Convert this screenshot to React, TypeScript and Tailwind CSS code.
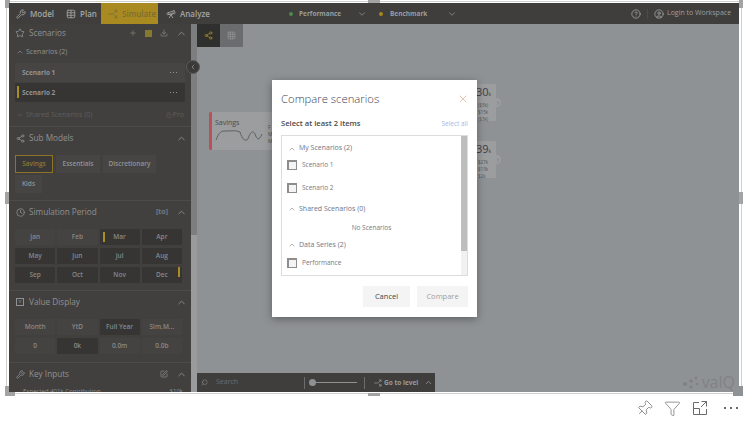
import { ChevronDown, ChevronLeft, ChevronRight, ChevronUp, CircleHelp, CircleUser, Clock, Download, Filter, Pin, Plus, Search, Share2, Star, Table, Telescope, Wrench, X, Split, SquarePen, Grid3x3, Lock } from 'lucide-react';
import type { ReactNode } from 'react';

const font = 'font-["Open_Sans",sans-serif]';

function TopItem({ icon, label, labelClass, className }: { icon: ReactNode; label: string; labelClass: string; className: string }) {
  return (
    <div className={`flex h-full shrink-0 items-center gap-[4px] whitespace-nowrap text-[8px] font-semibold ${className}`}>
      {icon}
      <span className={labelClass}>{label}</span>
    </div>
  );
}

function SectionHead({ icon, title, right, className }: { icon: ReactNode; title: string; right?: ReactNode; className?: string }) {
  return (
    <div className={`flex h-[18px] shrink-0 items-center pl-[6px] pr-[4px] text-[#8f9192] ${className ?? ''}`}>
      <span className="flex w-[10px] justify-center">{icon}</span>
      <span className="ml-[4px] text-[8.2px]">{title}</span>
      <span className="ml-auto flex items-center gap-[8px]">
        {right}
        <ChevronUp size={11} className="text-[#8a8c8c]" />
      </span>
    </div>
  );
}

function Dots() {
  return (
    <span className="flex gap-[2px]">
      <span className="h-px w-px bg-current" />
      <span className="h-px w-px bg-current" />
      <span className="h-px w-px bg-current" />
    </span>
  );
}

function Cell({ label, dark, marker }: { label: string; dark?: boolean; marker?: 'left' | 'right' }) {
  return (
    <div className={`relative flex h-[16px] items-center justify-center rounded-[1px] text-[6.5px] font-semibold text-[#85888a] ${dark ? 'bg-[#363534]' : 'bg-[#454341]'}`}>
      {marker === 'left' && <span className="absolute left-[3px] top-[3px] h-[10px] w-[2px] bg-[#a88d24]" />}
      {marker === 'right' && <span className="absolute right-[2px] top-0 h-[10px] w-[2px] bg-[#a88d24]" />}
      {label}
    </div>
  );
}

function CheckRow({ label, className }: { label: string; className?: string }) {
  return (
    <div className={`flex items-center pl-[5px] ${className ?? ''}`}>
      <span className="h-[10px] w-[10px] border border-t-2 border-l-2 border-[#8d8d8d] bg-[#f4f4f4]" />
      <span className="ml-[5px] text-[6.5px] text-[#77777f]">{label}</span>
    </div>
  );
}

function GroupHead({ label, className }: { label: string; className?: string }) {
  return (
    <div className={`flex items-center pl-[6px] text-[7px] text-[#6e7488] ${className ?? ''}`}>
      <ChevronUp size={8} className="mr-[3px] text-[#8a8a8a]" />
      {label}
    </div>
  );
}

function MiniCard({ value, lines, className }: { value: string; lines: string[]; className: string }) {
  return (
    <div className={`absolute h-[37px] w-[30px] rounded-[1px] bg-[#9b9d9e] pl-[10px] ${className}`}>
      <div className="text-[11px] leading-[15px] text-[#3c4048]">{value}<span className="text-[5px]">k</span></div>
      <div className="pl-[2px] text-[4.5px] leading-[7px] text-[#55575a]">
        {lines.map((l) => <div key={l}>{l}</div>)}
      </div>
      <span className="absolute -right-[5px] top-[14px] flex h-[9px] w-[6px] items-center justify-center rounded-r-full bg-[#9b9d9e]">
        <ChevronRight size={6} className="text-[#6a6c6e]" />
      </span>
    </div>
  );
}

const months = ['Jan', 'Feb', 'Mar', 'Apr', 'May', 'Jun', 'Jul', 'Aug', 'Sep', 'Oct', 'Nov', 'Dec'];

export default function App() {
  return (
    <div className={`relative h-[423px] w-[752px] overflow-hidden bg-white ${font}`}>
      {/* visual container outline and handles */}
      <div className="absolute left-[6px] top-[1px] h-[393px] w-[736px] border border-[#cfcfcf]" />
      <span className="absolute left-[5px] top-0 h-[8px] w-[5px] bg-[#a3a3a3]" />
      <span className="absolute left-[368px] top-0 h-[3px] w-[12px] bg-[#a3a3a3]" />
      <span className="absolute left-[739px] top-0 h-[8px] w-[4px] bg-[#a3a3a3]" />
      <span className="absolute left-[5px] top-[192px] h-[12px] w-[4px] bg-[#a3a3a3]" />
      <span className="absolute left-[739px] top-[192px] h-[12px] w-[4px] bg-[#a3a3a3]" />
      <span className="absolute left-[5px] top-[386px] h-[10px] w-[10px] bg-[#a3a3a3]" />
      <span className="absolute left-[368px] top-[393px] h-[3px] w-[12px] bg-[#a3a3a3]" />
      <span className="absolute left-[733px] top-[386px] h-[10px] w-[10px] bg-[#8f9294]" />

      <div className="pl-[9px] pt-[3px]">
        <div className="relative flex h-[389px] w-[730px] flex-col overflow-hidden bg-[#8f9294]">
          {/* top bar */}
          <div className="flex h-[21px] shrink-0 items-center bg-[#3f3e3c]">
            <TopItem className="ml-[7px] text-[#a5a5a4]" labelClass="w-[23px]" icon={<Wrench size={10} />} label="Model" />
            <TopItem className="ml-[13px] text-[#a5a5a4]" labelClass="w-[14px]" icon={<Table size={10} />} label="Plan" />
            <TopItem className="ml-[7px] w-[57px] bg-[#a98a20] pl-[7px] text-[#7c6d33]" labelClass="" icon={<Split size={10} className="rotate-90" />} label="Simulate" />
            <TopItem className="ml-[8px] text-[#a5a5a4]" labelClass="w-[28px]" icon={<Telescope size={10} />} label="Analyze" />
            <span className="ml-[81px] h-[4px] w-[4px] shrink-0 rounded-full bg-[#4f8a4b]" />
            <span className="ml-[6px] w-[41px] shrink-0 whitespace-nowrap text-[6.5px] font-bold text-[#9a9c9d]">Performance</span>
            <ChevronDown size={10} className="ml-[17px] shrink-0 text-[#8a8c8c]" />
            <span className="ml-[12px] h-[4px] w-[4px] shrink-0 rounded-full bg-[#a8871c]" />
            <span className="ml-[7px] w-[35px] shrink-0 whitespace-nowrap text-[6.5px] font-bold text-[#9a9c9d]">Benchmark</span>
            <ChevronDown size={10} className="ml-[22px] shrink-0 text-[#8a8c8c]" />
            <CircleHelp size={10} className="ml-[174px] shrink-0 text-[#a0a0a0]" />
            <span className="ml-[6px] h-[10px] w-px shrink-0 bg-[#4c4b49]" />
            <CircleUser size={10} className="ml-[6px] shrink-0 text-[#a0a0a0]" />
            <span className="ml-[3px] shrink-0 whitespace-nowrap text-[7px] text-[#9f9f9f]">Login to Workspace</span>
          </div>

          <div className="flex min-h-0 flex-1">
            {/* side panel */}
            <div className="flex w-[182px] shrink-0 flex-col overflow-hidden bg-[#42403e]">
              <SectionHead
                icon={<Star size={10} />}
                title="Scenarios"
                right={
                  <>
                    <Plus size={8} className="text-[#7d8a70]" />
                    <span className="h-[7px] w-[7px] bg-[#85792e]" />
                    <Download size={8} className="text-[#8a8c8c]" />
                  </>
                }
              />
              <div className="mt-[5px] flex h-[10px] shrink-0 items-center pl-[7px] text-[7px] text-[#8f9192]">
                <ChevronUp size={8} className="mr-[2px]" />
                Scenarios (2)
              </div>
              <div className="mx-[6px] mt-[6px] flex h-[19px] shrink-0 items-center justify-between rounded-[1px] bg-[#474543] pl-[7px] pr-[8px] text-[6.5px] font-bold text-[#8f9396]">
                Scenario 1
                <Dots />
              </div>
              <div className="relative mx-[6px] mt-px flex h-[19px] shrink-0 items-center justify-between rounded-[1px] bg-[#363534] pl-[7px] pr-[8px] text-[6.5px] font-bold text-[#8f9396]">
                <span className="absolute left-[2px] top-[3px] h-[12px] w-[2px] bg-[#a88d24]" />
                Scenario 2
                <Dots />
              </div>
              <div className="mt-[8px] flex h-[10px] shrink-0 items-center justify-between pl-[7px] pr-[7px] text-[7px] text-[#5e5e5d]">
                <span className="flex items-center">
                  <ChevronDown size={8} className="mr-[2px]" />
                  Shared Scenarios (0)
                </span>
                <span className="flex items-center gap-[1px]"><Lock size={6} />Pro</span>
              </div>
              <div className="mt-[6px] h-px shrink-0 bg-[#4d4b49]" />

              <SectionHead className="mt-[2px]" icon={<Share2 size={9} />} title="Sub Models" />
              <div className="mt-[8px] flex shrink-0 flex-wrap gap-x-[3px] gap-y-[2px] pl-[6px] pr-[20px] text-[6.5px] font-semibold text-[#8f9396]">
                <div className="flex h-[18px] w-[38px] items-center justify-center border border-[#8b7425] bg-[#3a3937] text-[#8b7a35]">Savings</div>
                <div className="flex h-[18px] w-[44px] items-center justify-center bg-[#474543]">Essentials</div>
                <div className="flex h-[18px] w-[53px] items-center justify-center bg-[#474543]">Discretionary</div>
                <div className="flex h-[18px] w-[27px] items-center justify-center bg-[#474543]">Kids</div>
              </div>
              <div className="mt-[7px] h-px shrink-0 bg-[#4d4b49]" />

              <SectionHead
                className="mt-[2px]"
                icon={<Clock size={9} />}
                title="Simulation Period"
                right={<span className="text-[7px] font-bold text-[#6f7b8e]">[to]</span>}
              />
              <div className="ml-[6px] mt-[8px] grid w-[167px] shrink-0 grid-cols-4 gap-x-[2px] gap-y-[3px]">
                {months.map((m) => (
                  <Cell key={m} label={m} dark={m !== 'Jan' && m !== 'Feb'} marker={m === 'Mar' ? 'left' : m === 'Dec' ? 'right' : undefined} />
                ))}
              </div>
              <div className="mt-[7px] h-px shrink-0 bg-[#4d4b49]" />

              <SectionHead
                className="mt-[2px]"
                icon={<span className="flex h-[8px] w-[8px] items-center justify-center border border-[#8f9192] text-[5px]">v</span>}
                title="Value Display"
              />
              <div className="ml-[6px] mt-[8px] grid w-[167px] shrink-0 grid-cols-4 gap-x-[2px] gap-y-[3px]">
                <Cell label="Month" />
                <Cell label="YtD" />
                <Cell label="Full Year" dark />
                <Cell label="Sim.M..." />
                <Cell label="0" />
                <Cell label="0k" dark />
                <Cell label="0.0m" />
                <Cell label="0.0b" />
              </div>
              <div className="mt-[8px] h-px shrink-0 bg-[#4d4b49]" />

              <SectionHead
                className="mt-[2px]"
                icon={<Wrench size={9} />}
                title="Key Inputs"
                right={<SquarePen size={8} />}
              />
              <div className="mt-[4px] flex shrink-0 justify-between pl-[14px] pr-[8px] text-[6px] text-[#8c8f90]">
                <span>Expected 401k Contribution</span>
                <span>$10k</span>
              </div>
            </div>

            {/* panel scrollbar */}
            <div className="w-[6px] shrink-0 bg-[#999b9c]">
              <div className="h-[211px] bg-[#7c7e7f]" />
            </div>

            {/* canvas */}
            <div className="relative flex-1">
              <div className="flex h-[23px]">
                <div className="flex w-[23px] items-center justify-center bg-[#2f2f2e]">
                  <Share2 size={9} className="text-[#a38a2a]" />
                </div>
                <div className="flex w-[23px] items-center justify-center bg-[#6b6c6d]">
                  <Grid3x3 size={9} strokeWidth={1} className="text-[#b0b1b2]" />
                </div>
              </div>

              <div className="absolute left-[12px] top-[88px] h-[38px] w-[70px] rounded-l-[2px] border-l-[3px] border-[#bc5058] bg-[#9b9d9e]">
                <div className="pl-[3px] pt-[6px] text-[7px] leading-[10px] text-[#4a4c4f]">Savings</div>
                <svg width="52" height="16" viewBox="0 0 52 16" className="ml-[2px]" fill="none" stroke="#4f5356" strokeWidth="0.8">
                  <path d="M2 12 C5 4 7 3 12 3 C18 3 22 2 26 4 C28 11 31 14 34 11 C36 4 39 2 41 6 C43 12 45 13 48 6" />
                </svg>
                <div className="absolute left-[56px] top-[12px] text-[5px] leading-[7px] text-[#4f5356]">
                  <div>F</div>
                  <div>M</div>
                  <div>M</div>
                </div>
              </div>
              <MiniCard value="30" lines={['($5k)', '$15k', '($3k)']} className="left-[269px] top-[60px]" />
              <MiniCard value="39" lines={['$27k', '$13k', '$2k']} className="left-[269px] top-[117px]" />

              <div className="absolute bottom-0 left-0 flex h-[19px] w-[238px] items-center whitespace-nowrap bg-[#3f3e3d] text-[7px] text-[#6b6c6d]">
                <Search size={7} className="ml-[4px] -scale-x-100 text-[#8a8b8c]" />
                <span className="ml-[8px] w-[88px]">Search</span>
                <span className="h-[12px] w-px bg-[#6b6c6d]" />
                <span className="ml-[4px] h-[7px] w-[7px] rounded-full bg-[#8f9092]" />
                <span className="h-px w-[41px] bg-[#8f9092]" />
                <span className="ml-[7px] h-[12px] w-px bg-[#6b6c6d]" />
                <Split size={8} className="ml-[9px] rotate-90 text-[#a0a0a0]" />
                <span className="ml-[2px] w-[35px] text-[6.5px] font-bold text-[#9c9c9c]">Go to level</span>
                <ChevronUp size={9} className="ml-[5px] text-[#a0a0a0]" />
              </div>

              <div className="absolute bottom-[2px] right-[4px] flex items-center gap-[2px]">
                <svg width="17" height="13" viewBox="0 0 17 13" fill="#7f8183">
                  <circle cx="2" cy="8" r="2" />
                  <circle cx="8" cy="5" r="1.8" />
                  <circle cx="8" cy="11" r="1.6" />
                  <circle cx="13" cy="2" r="1.4" />
                  <circle cx="14" cy="8" r="1.3" />
                </svg>
                <span className="text-[16px] leading-none text-[#808284]">valQ</span>
              </div>
            </div>
          </div>

          {/* collapse button over the panel edge */}
          <span className="absolute left-[177px] top-[57px] flex h-[14px] w-[14px] items-center justify-center rounded-full border border-[#5a5b5b] bg-[#3b3a39]">
            <ChevronLeft size={8} className="text-[#a0a0a0]" />
          </span>
        </div>
      </div>

      {/* dialog */}
      <div className="absolute left-[272px] top-[80px] flex h-[237px] w-[205px] flex-col bg-white px-[9px] shadow-[0_2px_8px_rgba(0,0,0,0.35)]">
        <div className="mt-[10px] flex items-center justify-between">
          <span className="text-[11.3px] font-light leading-[18px] text-[#3d4452]">Compare scenarios</span>
          <X size={12} strokeWidth={1.2} className="mr-[-1px] text-[#d99a78]" />
        </div>
        <div className="mt-[10px] flex items-center justify-between">
          <span className="text-[7.6px] font-semibold text-[#4a4a4a]">Select at least 2 items</span>
          <span className="text-[6.5px] text-[#a9b4e6]">Select all</span>
        </div>
        <div className="relative mt-[6px] h-[141px] w-[187px] border border-[#dddddd]">
          <GroupHead label="My Scenarios (2)" className="mt-[7px]" />
          <CheckRow label="Scenario 1" className="mt-[6px]" />
          <CheckRow label="Scenario 2" className="mt-[13px]" />
          <GroupHead label="Shared Scenarios (0)" className="mt-[11px]" />
          <div className="mt-[9px] pr-[6px] text-center text-[6.5px] text-[#77777f]">No Scenarios</div>
          <GroupHead label="Data Series (2)" className="mt-[7px]" />
          <CheckRow label="Performance" className="mt-[7px]" />
          <div className="absolute bottom-0 right-0 top-0 w-[6px] bg-[#f1f1f1]">
            <div className="h-[115px] bg-[#bdbdbd]" />
          </div>
        </div>
        <div className="mt-[10px] flex justify-end gap-[7px]">
          <div className="flex h-[21px] w-[47px] items-center justify-center bg-[#f4f4f4] text-[7.5px] font-medium text-[#444444]">Cancel</div>
          <div className="flex h-[21px] w-[51px] items-center justify-center bg-[#f4f4f4] text-[7.5px] text-[#a0a0a0]">Compare</div>
        </div>
      </div>

      {/* visual footer icons */}
      <div className="absolute left-[636px] top-[399px] flex h-[18px] items-center text-[#6a6a6a]">
        <Pin size={17} strokeWidth={1} className="rotate-45" />
        <Filter size={17} strokeWidth={1} className="ml-[11px]" />
        <svg width="16" height="16" viewBox="0 0 16 16" fill="none" stroke="currentColor" strokeWidth="1" className="ml-[11px]">
          <path d="M7 2.5H1.5V14.5H14.5V9M1.5 8.5H7.5V14.5M9.5 1.5H14.5V6.5M14.5 1.5L9 7" />
        </svg>
        <span className="ml-[16px] flex gap-[4px]">
          <span className="h-[2px] w-[2px] bg-[#6a6a6a]" />
          <span className="h-[2px] w-[2px] bg-[#6a6a6a]" />
          <span className="h-[2px] w-[2px] bg-[#6a6a6a]" />
        </span>
      </div>
    </div>
  );
}
